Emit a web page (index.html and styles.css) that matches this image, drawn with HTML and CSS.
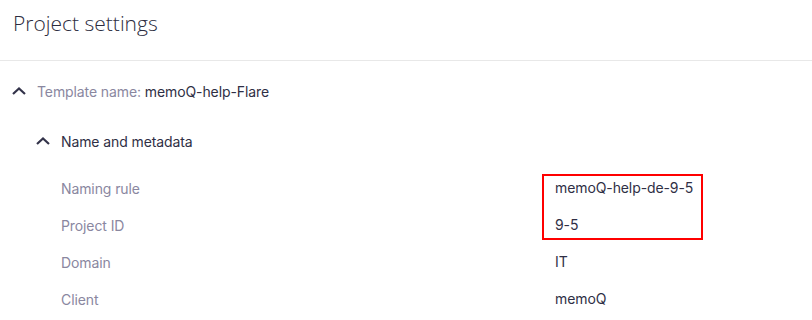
FILE: index.html
```html
<!DOCTYPE html>
<html lang="en">
<head>
    <meta charset="UTF-8">
    <title>Project settings</title>
    <link rel="stylesheet" href="styles.css">
</head>
<body>
    <div class="header">
        <h1>Project settings</h1>
    </div>
    <div class="section">
        <div class="toggle">
            <svg class="chevron" width="14" height="8" viewBox="0 0 14 8"><path d="M1 7 L7 1.5 L13 7" fill="none" stroke="#33334a" stroke-width="2.2"/></svg>
            <span class="muted">Template name:</span>&nbsp;<span>memoQ-help-Flare</span>
        </div>
        <div class="group">
            <div class="toggle">
                <svg class="chevron" width="14" height="8" viewBox="0 0 14 8"><path d="M1 7 L7 1.5 L13 7" fill="none" stroke="#33334a" stroke-width="2.2"/></svg>
                <span>Name and metadata</span>
            </div>
            <div class="fields">
                <div class="labels">
                    <div class="row muted">Naming rule</div>
                    <div class="row muted">Project ID</div>
                    <div class="row muted">Domain</div>
                    <div class="row muted">Client</div>
                </div>
                <div class="values">
                    <div class="highlight">
                        <div class="row">memoQ-help-de-9-5</div>
                        <div class="row">9-5</div>
                    </div>
                    <div class="row">IT</div>
                    <div class="row">memoQ</div>
                </div>
            </div>
        </div>
    </div>
</body>
</html>
```

FILE: styles.css
```css
body {
    margin: 0;
    font-family: Inter, "Noto Sans", sans-serif;
    font-size: 14px;
    letter-spacing: -0.1px;
    color: #2f2f45;
    background: #fff;
}
.header {
    height: 60px;
    border-bottom: 1px solid #e8e8e8;
    padding-left: 13px;
}
h1 {
    margin: 0;
    padding-top: 8px;
    font-family: "Open Sans", sans-serif;
    font-weight: 300;
    font-size: 21px;
    letter-spacing: 0;
    color: #2c2c40;
    line-height: 30px;
}
.section {
    padding: 20px 0 0 12px;
}
.toggle {
    display: flex;
    align-items: center;
    height: 20px;
}
.chevron {
    margin-right: 11px;
}
.muted {
    color: #8a879f;
}
.group {
    padding: 30px 0 0 24px;
}
.fields {
    display: flex;
    padding: 20px 0 0 25px;
}
.labels {
    width: 494px;
    padding-top: 9px;
}
.values {
    padding-top: 3px;
}
.highlight {
    border: 2px solid #ff0000;
    width: 146px;
    padding: 3px 0 0 11px;
    margin: 0 0 13px -13px;
}
.highlight .row:last-child {
    height: 22px;
}
.row {
    height: 37px;
    line-height: 17px;
}
```
